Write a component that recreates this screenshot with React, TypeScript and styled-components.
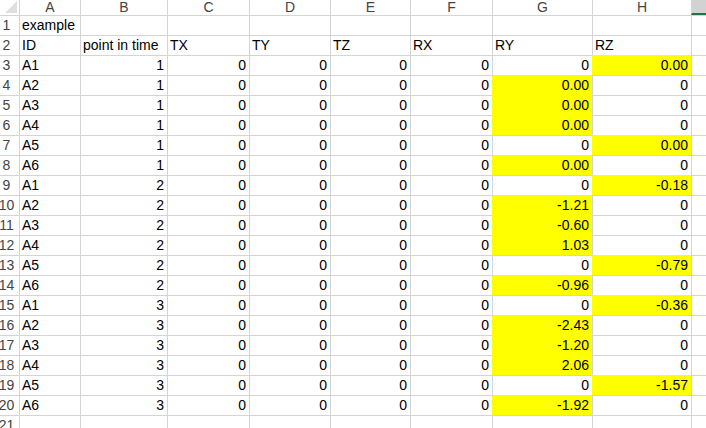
import styled, { createGlobalStyle } from "styled-components";

const GlobalStyle = createGlobalStyle`
  html, body {
    margin: 0;
    padding: 0;
    background: #ffffff;
    overflow: hidden;
  }
  body {
    font-family: "Liberation Sans", Arial, sans-serif;
  }
`;

const COLUMNS = ["A", "B", "C", "D", "E", "F", "G", "H"];
const GRID_LINE = "#d4d4d4";
const FILL = "#ffff00";

type Row = {
  id: string;
  time: number;
  ry: string;
  rz: string;
  hiRz: boolean;
};

const rows: Row[] = [
  { id: "A1", time: 1, ry: "0", rz: "0.00", hiRz: true },
  { id: "A2", time: 1, ry: "0.00", rz: "0", hiRz: false },
  { id: "A3", time: 1, ry: "0.00", rz: "0", hiRz: false },
  { id: "A4", time: 1, ry: "0.00", rz: "0", hiRz: false },
  { id: "A5", time: 1, ry: "0", rz: "0.00", hiRz: true },
  { id: "A6", time: 1, ry: "0.00", rz: "0", hiRz: false },
  { id: "A1", time: 2, ry: "0", rz: "-0.18", hiRz: true },
  { id: "A2", time: 2, ry: "-1.21", rz: "0", hiRz: false },
  { id: "A3", time: 2, ry: "-0.60", rz: "0", hiRz: false },
  { id: "A4", time: 2, ry: "1.03", rz: "0", hiRz: false },
  { id: "A5", time: 2, ry: "0", rz: "-0.79", hiRz: true },
  { id: "A6", time: 2, ry: "-0.96", rz: "0", hiRz: false },
  { id: "A1", time: 3, ry: "0", rz: "-0.36", hiRz: true },
  { id: "A2", time: 3, ry: "-2.43", rz: "0", hiRz: false },
  { id: "A3", time: 3, ry: "-1.20", rz: "0", hiRz: false },
  { id: "A4", time: 3, ry: "2.06", rz: "0", hiRz: false },
  { id: "A5", time: 3, ry: "0", rz: "-1.57", hiRz: true },
  { id: "A6", time: 3, ry: "-1.92", rz: "0", hiRz: false },
];

const Sheet = styled.div`
  display: grid;
  grid-template-columns: 19px 61px 87px 82px 81px 80px 82px 100px 99px 1fr;
  grid-template-rows: 15px;
  grid-auto-rows: 20px;
  width: 706px;
  height: 428px;
  overflow: hidden;
  font-size: 14px;
  color: #000000;
`;

const Corner = styled.div`
  box-sizing: border-box;
  position: relative;
`;

const ColHead = styled.div<{ $selected?: boolean }>`
  box-sizing: border-box;
  border-left: 1px solid ${GRID_LINE};
  border-bottom: ${(p) => (p.$selected ? "2px solid #217346" : "none")};
  background: ${(p) => (p.$selected ? "#d2d2d2" : "#ffffff")};
  color: #444444;
  font-size: 14px;
  line-height: 14px;
  text-align: center;
`;

const RowHead = styled.div`
  box-sizing: border-box;
  border-top: 1px solid ${GRID_LINE};
  color: #444444;
  display: flex;
  align-items: flex-end;
  justify-content: center;
  padding: 0 6px 1px 0;
  line-height: 17px;
  white-space: nowrap;
  overflow: hidden;
`;

const Cell = styled.div<{ $num?: boolean; $fill?: boolean }>`
  box-sizing: border-box;
  border-left: 1px solid ${(p) => (p.$fill ? FILL : GRID_LINE)};
  border-top: 1px solid ${(p) => (p.$fill ? FILL : GRID_LINE)};
  background: ${(p) => (p.$fill ? FILL : "transparent")};
  display: flex;
  align-items: flex-end;
  justify-content: ${(p) => (p.$num ? "flex-end" : "flex-start")};
  padding: 0 ${(p) => (p.$num ? "3px" : "0")} 1px ${(p) => (p.$num ? "0" : "2px")};
  line-height: 17px;
  white-space: nowrap;
  overflow: visible;
`;

const SelectAll = () => (
  <svg
    width="19"
    height="15"
    viewBox="0 0 19 15"
    style={{ position: "absolute", left: 0, top: 0 }}
    aria-hidden="true"
  >
    <polygon points="17,1 17,13 5,13" fill="#dfdfdf" />
  </svg>
);

const BlankRow = ({ n }: { n: number }) => (
  <>
    <RowHead>{n}</RowHead>
    {COLUMNS.map((c) => (
      <Cell key={c} />
    ))}
    <Cell />
  </>
);

export default function App() {
  return (
    <>
      <GlobalStyle />
      <Sheet>
        <Corner>
          <SelectAll />
        </Corner>
        {COLUMNS.map((c) => (
          <ColHead key={c}>{c}</ColHead>
        ))}
        <ColHead $selected />

        <RowHead>1</RowHead>
        <Cell>example</Cell>
        {COLUMNS.slice(1).map((c) => (
          <Cell key={c} />
        ))}
        <Cell />

        <RowHead>2</RowHead>
        {["ID", "point in time", "TX", "TY", "TZ", "RX", "RY", "RZ"].map((h) => (
          <Cell key={h}>{h}</Cell>
        ))}
        <Cell />

        {rows.map((r, i) => (
          <Row key={i} n={i + 3} row={r} />
        ))}

        <BlankRow n={21} />
      </Sheet>
    </>
  );
}

const Row = ({ n, row }: { n: number; row: Row }) => (
  <>
    <RowHead>{n}</RowHead>
    <Cell>{row.id}</Cell>
    <Cell $num>{row.time}</Cell>
    <Cell $num>0</Cell>
    <Cell $num>0</Cell>
    <Cell $num>0</Cell>
    <Cell $num>0</Cell>
    <Cell $num $fill={!row.hiRz}>
      {row.ry}
    </Cell>
    <Cell $num $fill={row.hiRz}>
      {row.rz}
    </Cell>
    <Cell />
  </>
);
